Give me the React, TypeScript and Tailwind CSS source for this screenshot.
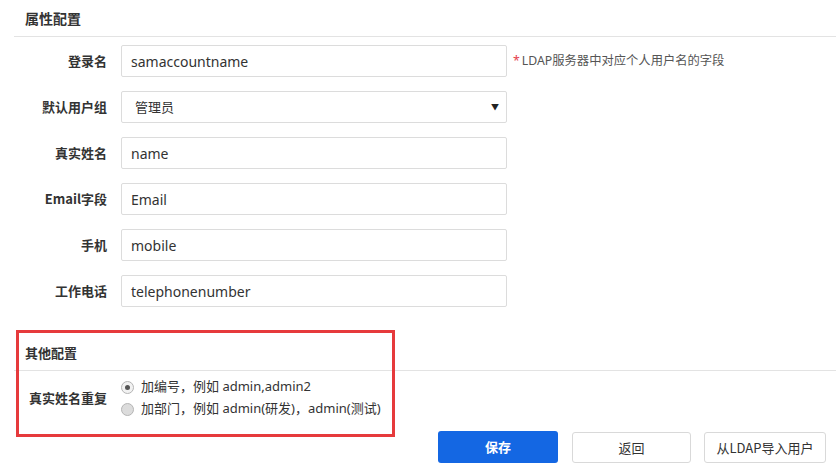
import React from "react";

const rows: { label: string; value: string; select?: boolean }[] = [
  { label: "登录名", value: "samaccountname" },
  { label: "默认用户组", value: "管理员", select: true },
  { label: "真实姓名", value: "name" },
  { label: "Email字段", value: "Email" },
  { label: "手机", value: "mobile" },
  { label: "工作电话", value: "telephonenumber" },
];

function Radio({ checked }: { checked?: boolean }) {
  return (
    <span
      className={
        "w-[13px] h-[13px] rounded-full border border-[#b5b5b5] flex items-center justify-center shrink-0 " +
        (checked ? "bg-[#f2f2f2]" : "bg-[#dcdcdc]")
      }
    >
      {checked && <span className="w-[5px] h-[5px] rounded-full bg-[#555]" />}
    </span>
  );
}

export default function App() {
  return (
    <div className="w-[836px] h-[473px] bg-white relative overflow-hidden text-[#333] font-['Noto_Sans','Noto_Sans_CJK_SC',sans-serif]">
      <section className="ml-[14px]">
        <div className="h-[36px] border-b border-[#e3e3e3] pl-[11px] flex items-center box-content">
          <span className="text-[14px] font-bold font-['Noto_Sans_CJK_SC',sans-serif]">属性配置</span>
        </div>
        <div className="pt-[8px] flex flex-col gap-[14px]">
          {rows.map((r, i) => (
            <div key={r.label} className="flex items-center h-[32px]">
              <div className="w-[93px] text-right text-[13px] font-bold font-['Noto_Sans_CJK_SC',sans-serif]">
                {r.label}
              </div>
              <div className="ml-[14px] w-[386px] h-[32px] border border-[#dcdcdc] rounded-[2px] flex items-center pl-[9px] pr-[7px]">
                {r.select ? (
                  <>
                    <span className="text-[13px] flex-1 pl-[4px] font-['Noto_Sans_CJK_SC',sans-serif]">{r.value}</span>
                    <span className="text-[8px] text-[#222]">▼</span>
                  </>
                ) : (
                  <span className="text-[14px]">{r.value}</span>
                )}
              </div>
              {i === 0 && (
                <div className="ml-[6px] flex items-center text-[12.3px] text-[#555]">
                  <span className="text-[#e5404b] mr-[2px]">*</span>
                  <span>LDAP服务器中对应个人用户名的字段</span>
                </div>
              )}
            </div>
          ))}
        </div>
      </section>

      <section className="ml-[14px] mt-[28px]">
        <div className="h-[35px] border-b border-[#e3e3e3] pl-[11px] flex items-center box-content">
          <span className="text-[13px] font-bold font-['Noto_Sans_CJK_SC',sans-serif]">其他配置</span>
        </div>
        <div className="flex items-center pt-[5px]">
          <div className="w-[93px] text-right text-[13px] font-bold font-['Noto_Sans_CJK_SC',sans-serif]">
            真实姓名重复
          </div>
          <div className="ml-[14px] flex flex-col text-[13px] text-[#333]">
            <div className="h-[22px] flex items-center gap-[7px]">
              <Radio checked />
              <span>加编号，例如 admin,admin2</span>
            </div>
            <div className="h-[22px] flex items-center gap-[7px]">
              <Radio />
              <span>加部门，例如 admin(研发)，admin(测试)</span>
            </div>
          </div>
        </div>
      </section>

      <div className="mt-[11px] flex justify-end pr-[10px]">
        <button className="w-[120px] h-[32px] rounded-[3px] bg-[#1467e3] text-white text-[13px] font-bold font-['Noto_Sans_CJK_SC',sans-serif]">
          保存
        </button>
        <button className="ml-[14px] w-[119px] h-[31px] mt-[1px] rounded-[3px] border border-[#d9d9d9] bg-white text-[13px] text-[#333] font-['Noto_Sans_CJK_SC',sans-serif]">
          返回
        </button>
        <button className="ml-[13px] w-[122px] h-[31px] mt-[1px] rounded-[3px] border border-[#d9d9d9] bg-white text-[13px] text-[#333] font-['Noto_Sans_CJK_SC',sans-serif]">
          从LDAP导入用户
        </button>
      </div>

      <div className="absolute left-[16px] top-[330px] w-[379px] h-[107px] border-[3px] border-[#e63a3c] pointer-events-none" />
    </div>
  );
}
